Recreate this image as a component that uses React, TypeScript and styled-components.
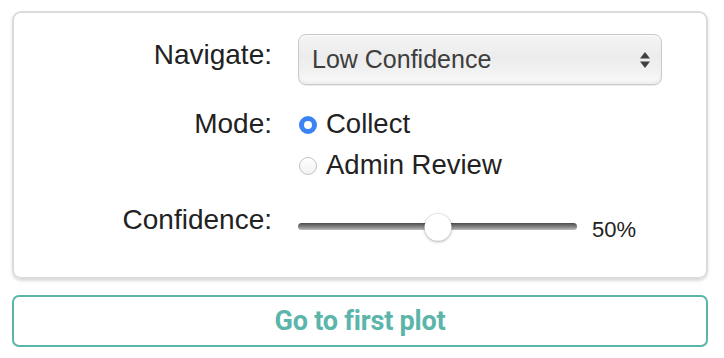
import styled, { createGlobalStyle } from 'styled-components';

const GlobalStyle = createGlobalStyle`
  html, body {
    margin: 0;
    padding: 0;
    background: #fff;
  }
  body {
    font-family: "Liberation Sans", Arial, Helvetica, sans-serif;
    color: #222;
  }
`;

const Page = styled.div`
  width: 696px;
  padding: 11px 16px 0 12px;
  display: flex;
  flex-direction: column;
  gap: 16px;
`;

const Card = styled.div`
  border: 2px solid #dcdcdc;
  border-radius: 9px;
  box-shadow: 0 2px 3px rgba(0, 0, 0, 0.14);
  padding: 21px 0 35px;
  display: grid;
  grid-template-columns: 258px 1fr;
  column-gap: 26px;
  row-gap: 23px;
  align-items: start;
`;

const Label = styled.div<{ $offset?: number }>`
  text-align: right;
  font-size: 28px;
  line-height: 32px;
  color: #222;
  margin-top: ${(p) => p.$offset ?? 0}px;
`;

const SelectBox = styled.div`
  position: relative;
  width: 364px;
  height: 51px;
  box-sizing: border-box;
  border: 1px solid #c9c9c9;
  border-radius: 8px;
  background: linear-gradient(#f4f4f4 0%, #ececec 45%, #f3f3f3 80%, #fbfbfb 100%);
  box-shadow: inset 0 1px 2px rgba(255, 255, 255, 0.9), inset 0 -2px 3px rgba(0, 0, 0, 0.06),
    0 1px 1px rgba(0, 0, 0, 0.08);
  display: flex;
  align-items: center;
  justify-content: space-between;
  padding: 0 10px 0 13px;
  font-size: 25px;
  color: #3d3d3d;
`;

const Radios = styled.div`
  display: flex;
  flex-direction: column;
  gap: 9px;
`;

const RadioRow = styled.label`
  display: flex;
  align-items: center;
  gap: 9px;
  font-size: 27.5px;
  line-height: 32px;
  color: #222;
`;

const RadioDot = styled.span<{ $checked?: boolean }>`
  width: 18px;
  height: 18px;
  box-sizing: border-box;
  border-radius: 50%;
  margin: 2px 0 0 1px;
  flex-shrink: 0;
  ${(p) =>
    p.$checked
      ? `
    background: #fff;
    border: 5px solid #3b82f6;
  `
      : `
    background: linear-gradient(#fff, #f2f2f2);
    border: 1px solid #c4c4c4;
  `}
`;

const SliderRow = styled.div`
  display: flex;
  align-items: center;
  gap: 15px;
  height: 32px;
  margin-top: 6px;
`;

const Track = styled.div`
  position: relative;
  width: 279px;
  height: 7px;
  border-radius: 4px;
  background: linear-gradient(#4a4a4a, #8a8a8a 60%, #bdbdbd);
`;

const Thumb = styled.div`
  position: absolute;
  top: 50%;
  width: 27px;
  height: 27px;
  border-radius: 50%;
  background: #fff;
  box-shadow: 0 1px 3px rgba(0, 0, 0, 0.3), 0 0 0 0.5px rgba(0, 0, 0, 0.1);
  transform: translate(-50%, -45%);
`;

const Value = styled.span`
  font-size: 22px;
  color: #222;
  margin-top: 8px;
`;

const Button = styled.button`
  height: 52px;
  border: 2px solid #5bb5aa;
  border-radius: 7px;
  background: #fff;
  color: #5bb5aa;
  font-family: Roboto, "Liberation Sans", sans-serif;
  font-weight: 700;
  font-size: 27px;
  letter-spacing: -0.2px;
  cursor: pointer;
`;

const Arrows = () => (
  <svg width="12" height="18" viewBox="0 0 12 18">
    <path d="M6 1 L11 7.5 H1 Z" fill="#404040" />
    <path d="M6 17 L11 10.5 H1 Z" fill="#404040" />
  </svg>
);

export default function App() {
  const confidence = 50;
  return (
    <>
      <GlobalStyle />
      <Page>
        <Card>
          <Label $offset={5}>Navigate:</Label>
          <SelectBox>
            <span>Low Confidence</span>
            <Arrows />
          </SelectBox>

          <Label>Mode:</Label>
          <Radios>
            <RadioRow>
              <RadioDot $checked />
              Collect
            </RadioRow>
            <RadioRow>
              <RadioDot />
              Admin Review
            </RadioRow>
          </Radios>

          <Label>Confidence:</Label>
          <SliderRow>
            <Track>
              <Thumb style={{ left: `${confidence}%` }} />
            </Track>
            <Value>{confidence}%</Value>
          </SliderRow>
        </Card>
        <Button>Go to first plot</Button>
      </Page>
    </>
  );
}
